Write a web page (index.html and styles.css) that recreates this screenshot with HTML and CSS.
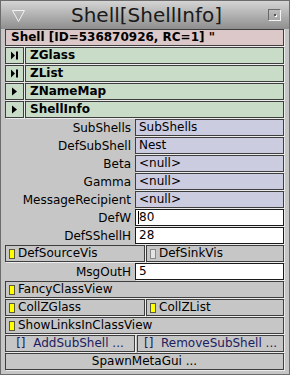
FILE: index.html
```html
<!DOCTYPE html>
<html>
<head>
<meta charset="utf-8">
<link rel="stylesheet" href="styles.css">
</head>
<body>
<div class="win">
  <div class="titlebar">
    <svg class="tri" width="13" height="13" viewBox="0 0 13 13"><polygon points="0.5,0.5 12.5,0.5 6.5,11.5" fill="none" stroke="#f2f2f2" stroke-width="1"/></svg>
    <span class="title">Shell[ShellInfo]</span>
    <span class="tbtn"><span class="tdot"></span></span>
  </div>
  <div class="content">
    <div class="row"><div class="cell pink bold grow">Shell [ID=536870926, RC=1] "</div></div>
    <div class="row"><div class="cell up ico"><svg width="9" height="9" viewBox="0 0 9 9"><polygon points="1,0.5 5,4.5 1,8.5" fill="#000"/><rect x="6" y="0.5" width="2" height="8" fill="#000"/></svg></div><div class="cell green bold grow">ZGlass</div></div>
    <div class="row"><div class="cell up ico"><svg width="9" height="9" viewBox="0 0 9 9"><polygon points="1,0.5 5,4.5 1,8.5" fill="#000"/><rect x="6" y="0.5" width="2" height="8" fill="#000"/></svg></div><div class="cell green bold grow">ZList</div></div>
    <div class="row"><div class="cell up ico"><svg width="9" height="9" viewBox="0 0 9 9"><polygon points="2,0.5 7,4.5 2,8.5" fill="#000"/></svg></div><div class="cell green bold grow">ZNameMap</div></div>
    <div class="row"><div class="cell up ico"><svg width="9" height="9" viewBox="0 0 9 9"><polygon points="2,0.5 7,4.5 2,8.5" fill="#000"/></svg></div><div class="cell green bold grow">ShellInfo</div></div>

    <div class="row"><div class="lbl">SubShells</div><div class="cell lav val">SubShells</div></div>
    <div class="row"><div class="lbl">DefSubShell</div><div class="cell lav val">Nest</div></div>
    <div class="row"><div class="lbl">Beta</div><div class="cell lav val">&lt;null&gt;</div></div>
    <div class="row"><div class="lbl">Gamma</div><div class="cell lav val">&lt;null&gt;</div></div>
    <div class="row"><div class="lbl">MessageRecipient</div><div class="cell lav val">&lt;null&gt;</div></div>
    <div class="row"><div class="lbl">DefW</div><div class="cell input val"><span class="caret"></span>80</div></div>
    <div class="row"><div class="lbl">DefSShellH</div><div class="cell input val">28</div></div>

    <div class="row"><div class="cell up half chk"><span class="ind on"></span>DefSourceVis</div><div class="cell up half2 chk"><span class="ind off"></span>DefSinkVis</div></div>
    <div class="row"><div class="lbl">MsgOutH</div><div class="cell input val">5</div></div>
    <div class="row"><div class="cell up grow chk"><span class="ind on"></span>FancyClassView</div></div>
    <div class="row"><div class="cell up half chk"><span class="ind on"></span>CollZGlass</div><div class="cell up half2 chk"><span class="ind on"></span>CollZList</div></div>
    <div class="row"><div class="cell up grow chk"><span class="ind on"></span>ShowLinksInClassView</div></div>
    <div class="row wide"><div class="cell up addb blue">[]&nbsp; AddSubShell ...</div><div class="cell up half2 blue">[]&nbsp; RemoveSubShell ...</div></div>
    <div class="row"><div class="cell up grow center">SpawnMetaGui ...</div></div>
  </div>
</div>
</body>
</html>
```

FILE: styles.css
```css
html, body {
  margin: 0;
  padding: 0;
  background: #c6c6c6;
}
.win {
  width: 290px;
  height: 375px;
  box-sizing: border-box;
  border: 1px solid #6c6c6c;
  background: #c6c6c6;
  font-family: "DejaVu Sans", sans-serif;
  font-size: 12px;
  color: #000;
  overflow: hidden;
}
.titlebar {
  height: 28px;
  display: flex;
  align-items: center;
  background: linear-gradient(#d4d4d4, #8e8e8e);
}
.tri {
  margin-left: 11px;
  margin-top: 2px;
}
.title {
  flex: 1;
  text-align: center;
  font-size: 20px;
  color: #1a1a1a;
}
.tbtn {
  width: 11px;
  height: 10px;
  margin-right: 8px;
  border-top: 1px solid #6a6a6a;
  border-left: 1px solid #6a6a6a;
  border-right: 1px solid #f4f4f4;
  border-bottom: 1px solid #f4f4f4;
  display: flex;
  align-items: center;
  justify-content: center;
}
.tdot {
  width: 2px;
  height: 2px;
  background: #555;
  box-shadow: 1px 1px 0 #fff;
}
.content {
  padding: 0 5px 0 4px;
}
.row {
  height: 18px;
  display: flex;
  gap: 1px;
}
.row.wide { gap: 2px; }
.cell {
  box-sizing: border-box;
  height: 17px;
  border: 1px solid #3e3e3e;
  box-shadow: 1px 1px 0 #ececec;
  display: flex;
  align-items: center;
  white-space: nowrap;
  overflow: hidden;
  line-height: 15px;
}
.grow { flex: 1; }
.bold { font-weight: bold; padding-left: 4px; }
.pink { background: #dcc8c8; padding-left: 5px; }
.green { background: #c8dcc8; }
.lav { background: #cccce0; }
.up { background: #c6c6c6; }
.ico {
  width: 19px;
  justify-content: center;
  background: #c8dcc8;
}
.lbl {
  width: 129px;
  text-align: right;
  padding-right: 3px;
  box-sizing: border-box;
  line-height: 18px;
  white-space: nowrap;
}
.val {
  flex: 1;
  padding-left: 3px;
}
.input {
  background: #fff;
  border: 1px solid #1a1a1a;
}
.caret {
  width: 1px;
  height: 13px;
  background: #000;
  margin-left: -1px;
}
.half { width: 140px; }
.addb { width: 130px; }
.half2 { flex: 1; }
.chk { padding-left: 3px; }
.ind {
  display: inline-block;
  box-sizing: border-box;
  width: 6px;
  height: 10px;
  margin-right: 3px;
}
.ind.on {
  background: #ffff00;
  border: 1px solid #5a5a3a;
}
.ind.off {
  background: #e4e4e4;
  border: 1px solid #8a8a8a;
}
.blue {
  color: #1c2060;
  justify-content: center;
}
.center { justify-content: center; }
```
